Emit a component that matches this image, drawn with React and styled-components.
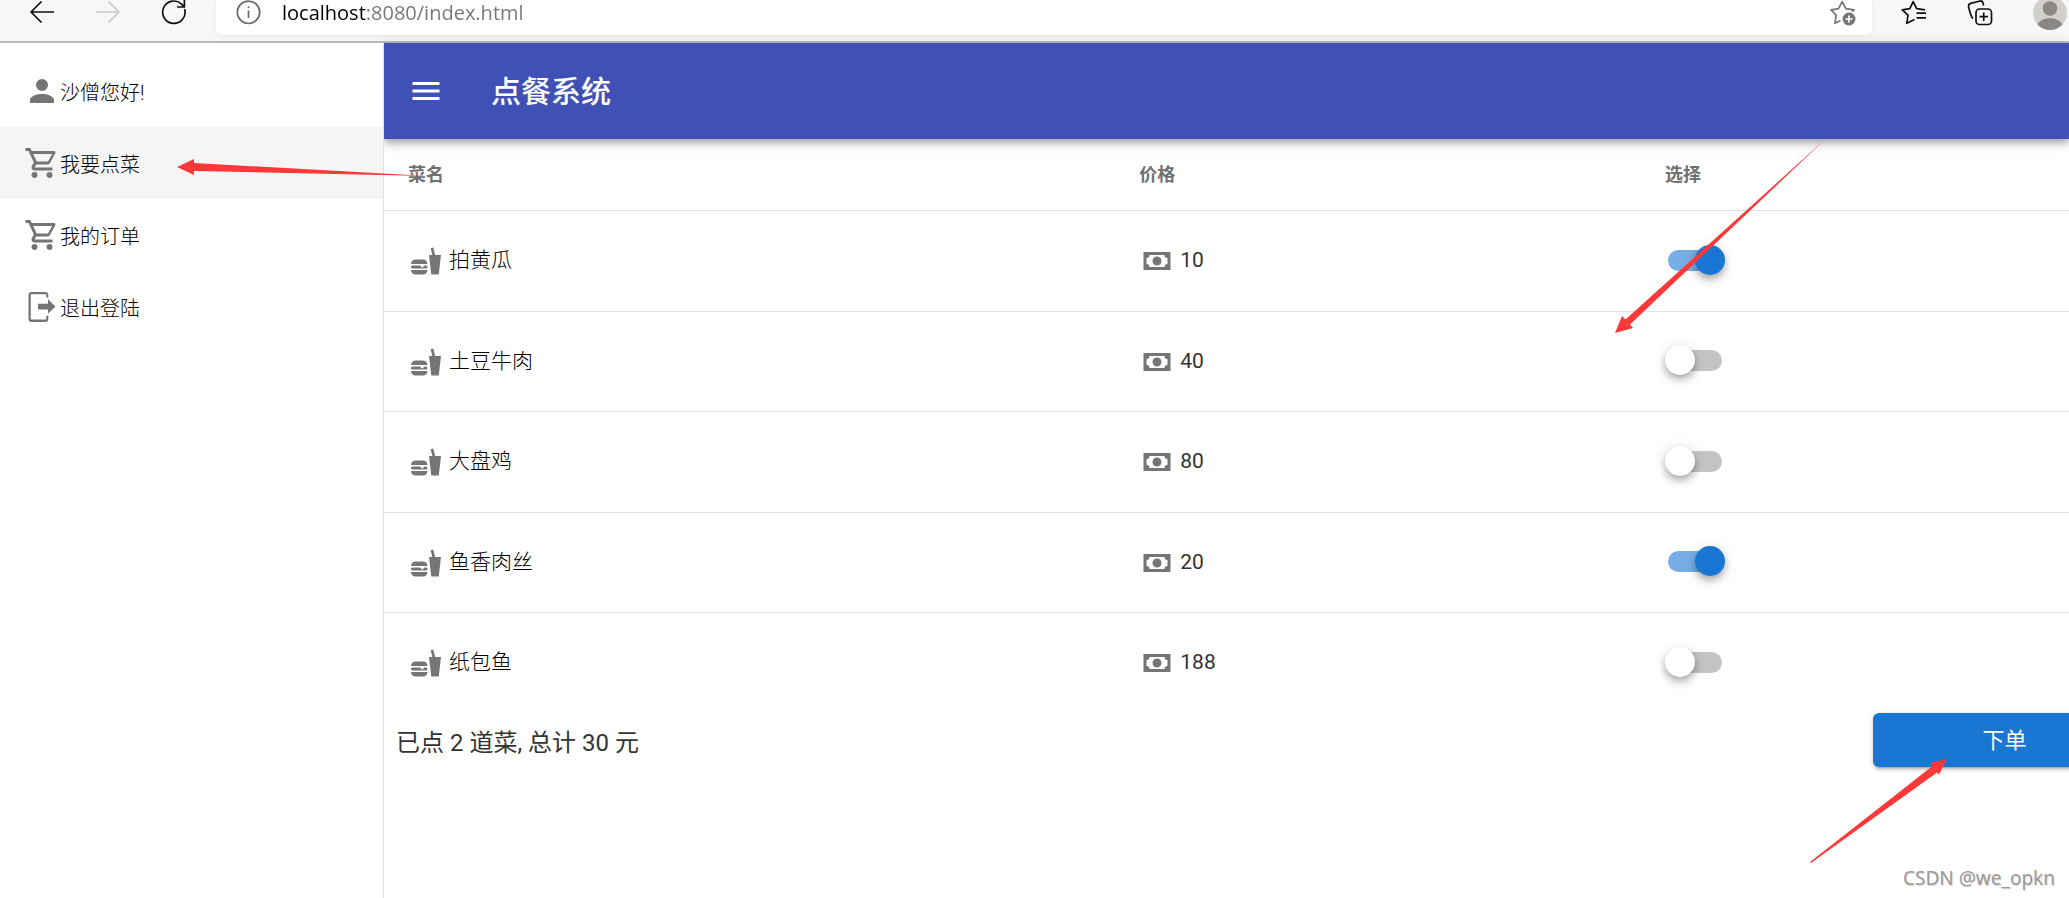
import React, { useState } from "react";
import styled, { createGlobalStyle, css } from "styled-components";

const GlobalStyle = createGlobalStyle`
  * { box-sizing: border-box; }
  body {
    margin: 0;
    background: #fff;
    color: rgba(0, 0, 0, 0.87);
    font-family: Roboto, "Noto Sans CJK SC", sans-serif;
    font-size: 21px;
  }
`;

const Page = styled.div`
  position: relative;
  display: flex;
  flex-direction: column;
  min-height: 100vh;
  overflow: hidden;
`;

/* ---------- browser toolbar ---------- */

const BrowserBar = styled.header`
  display: flex;
  align-items: flex-start;
  height: 43px;
  padding-left: 30px;
  background: #f7f7f7;
  border-bottom: 2px solid #bbb;
`;

const ToolButton = styled.button`
  display: block;
  flex: none;
  width: 26px;
  height: 26px;
  margin: 0 40px 0 0;
  padding: 0;
  border: 0;
  background: none;
  color: ${(p) => p.$color || "#111"};
  svg { display: block; width: 26px; height: 26px; overflow: visible; }
`;

const NavButtons = styled.div`
  display: flex;
  width: 186px;
  flex: none;
`;

const AddressBar = styled.div`
  display: flex;
  flex: 1;
  height: 35px;
  padding: 0 16px 0 20px;
  border-radius: 0 0 6px 6px;
  background: #fff;
  box-shadow: 0 1px 6px rgba(0, 0, 0, 0.08);
  ${ToolButton} { margin: 0; }
`;

const AddressInput = styled.input`
  flex: 1;
  height: 26px;
  margin: 0 0 0 20px;
  padding: 0;
  border: 0;
  outline: 0;
  font: 20px/26px "Open Sans", sans-serif;
  color: transparent;
  background: linear-gradient(90deg, #000 85px, #767676 85px);
  background-clip: text;
`;

const BrowserActions = styled.div`
  display: flex;
  flex: none;
  width: 197px;
  padding-left: 29px;
`;

const Avatar = styled.svg`
  flex: none;
  width: 34px;
  height: 34px;
  margin-top: -4px;
`;

/* ---------- layout ---------- */

const Body = styled.div`
  display: flex;
  flex: 1;
`;

const Sidebar = styled.nav`
  position: relative;
  z-index: 2;
  flex: none;
  width: 384px;
  padding-top: 12px;
  background: #fff;
  border-right: 1px solid #e0e0e0;
`;

const SideItem = styled.a`
  display: flex;
  align-items: center;
  height: 72px;
  padding-left: 24px;
  color: #000;
  font-size: 20px;
  font-weight: 300;
  text-decoration: none;
  ${(p) => p.$active && css`background: #f5f5f5;`}
`;

const Icon = styled.svg`
  display: block;
  flex: none;
  width: 36px;
  height: 36px;
  fill: ${(p) => p.$fill || "#757575"};
`;

const Main = styled.main`
  flex: 1;
  min-width: 0;
`;

const AppBar = styled.div`
  position: relative;
  display: flex;
  align-items: center;
  gap: 47px;
  height: 96px;
  padding: 0 24px;
  background: #3f51b5;
  color: #fff;
  box-shadow: 0 3px 6px -1px rgba(0, 0, 0, 0.2), 0 6px 8px rgba(0, 0, 0, 0.14),
    0 2px 15px rgba(0, 0, 0, 0.12);
`;

const MenuButton = styled.button`
  padding: 0;
  border: 0;
  background: none;
`;

const Title = styled.h1`
  margin: 0;
  padding-top: 2px;
  font-size: 30px;
  line-height: 36px;
  font-weight: 500;
`;

/* ---------- table ---------- */

const DishTable = styled.table`
  width: 100%;
  table-layout: fixed;
  border-collapse: separate;
  border-spacing: 0;
`;

const HeadCell = styled.th`
  width: ${(p) => p.$width || "auto"};
  height: 72px;
  padding: 0 24px 3px;
  border-bottom: 1px solid #e0e0e0;
  color: #707070;
  font-size: 18px;
  font-weight: 700;
  text-align: left;
`;

const Cell = styled.td`
  height: 100px;
  padding: 0 24px;
  color: ${(p) => (p.$light ? "#000" : "#333")};
  font-weight: ${(p) => (p.$light ? 300 : 400)};
`;

const Row = styled.tr`
  &:not(:last-child) ${Cell} { border-bottom: 1px solid #e0e0e0; }
  &:nth-child(odd):not(:last-child) ${Cell} { height: 101px; }
`;

const IconText = styled.div`
  display: flex;
  align-items: flex-start;
  gap: 5px;
  line-height: 34px;
`;

const Switch = styled.input`
  appearance: none;
  position: relative;
  display: block;
  width: 60px;
  height: 30px;
  margin: 0 0 3px;
  &::before {
    content: "";
    position: absolute;
    inset: 5px 3px 4px;
    border-radius: 11px;
    background: ${(p) => (p.checked ? "#78aee6" : "#c4c4c4")};
  }
  &::after {
    content: "";
    position: absolute;
    top: 0;
    left: ${(p) => (p.checked ? "30px" : "0")};
    width: 30px;
    height: 30px;
    border-radius: 50%;
    background: ${(p) => (p.checked ? "#1976d2" : "#fff")};
    box-shadow: 0 3px 6px -1px rgba(0, 0, 0, 0.2), 0 6px 8px rgba(0, 0, 0, 0.14),
      0 2px 15px rgba(0, 0, 0, 0.12);
  }
`;

const Footer = styled.div`
  display: flex;
  align-items: flex-start;
  justify-content: space-between;
  padding-left: 12px;
`;

const Total = styled.p`
  margin: 0;
  color: #333;
  font-size: 24px;
  line-height: 60px;
`;

const OrderButton = styled.button`
  width: 263px;
  height: 54px;
  margin-right: -67px;
  padding: 2px 0 0;
  border: 0;
  border-radius: 6px;
  background: #1976d2;
  color: #fff;
  font: 400 22px/52px Roboto, "Noto Sans CJK SC", sans-serif;
  box-shadow: 0 4px 2px -3px rgba(0, 0, 0, 0.2), 0 3px 3px rgba(0, 0, 0, 0.14),
    0 1px 7px rgba(0, 0, 0, 0.12);
`;

/* ---------- annotations over the page ---------- */

const Arrow = styled.svg`
  position: absolute;
  z-index: 3;
  top: ${(p) => p.$top}px;
  left: ${(p) => (p.$left === undefined ? "auto" : p.$left + "px")};
  right: ${(p) => (p.$right === undefined ? "auto" : p.$right + "px")};
  fill: #fd3838;
  pointer-events: none;
`;

const Watermark = styled.span`
  position: absolute;
  right: 14px;
  bottom: 7px;
  color: #999;
  font: 19px/26px "Noto Sans", sans-serif;
  text-shadow: 1px 1px 0 #e0e0e0;
`;

const PATHS = {
  account:
    "M12,4A4,4 0 0,1 16,8A4,4 0 0,1 12,12A4,4 0 0,1 8,8A4,4 0 0,1 12,4M12,14C16.42,14 20,15.79 20,18V20H4V18C4,15.79 7.58,14 12,14Z",
  cart:
    "M17,18A2,2 0 0,1 19,20A2,2 0 0,1 17,22C15.89,22 15,21.1 15,20C15,18.89 15.89,18 17,18M1,2H4.27L5.21,4H20A1,1 0 0,1 21,5C21,5.17 20.95,5.34 20.88,5.5L17.3,11.97C16.96,12.58 16.3,13 15.55,13H8.1L7.2,14.63L7.17,14.75A0.25,0.25 0 0,0 7.42,15H19V17H7C5.89,17 5,16.1 5,15C5,14.65 5.09,14.32 5.24,14.04L6.6,11.59L3,4H1V2M7,18A2,2 0 0,1 9,20A2,2 0 0,1 7,22C5.89,22 5,21.1 5,20C5,18.89 5.89,18 7,18M16,11L18.78,6H6.14L8.5,11H16Z",
  logout:
    "M16,16.5V13.6H9.3V9.8H16V6.9L21,11.7L16,16.5M14.2,2A2,2 0 0,1 16.2,4V6.2L14.8,5.2V3.5H4.5V20.4H14.8V18.4L16.2,17.4V20A2,2 0 0,1 14.2,22H5A2,2 0 0,1 3,20V4A2,2 0 0,1 5,2H14.2Z",
  menu: "M3,6H21V8H3V6M3,11H21V13H3V11M3,16H21V18H3V16Z",
  food:
    "M15.5,21L14,8H16.23L15.1,3.46L16.84,3L18.09,8H22L20.5,21H15.5M5,11H10A3,3 0 0,1 13,14H2A3,3 0 0,1 5,11M13,18A3,3 0 0,1 10,21H5A3,3 0 0,1 2,18H13M3,15H8L9.5,16.5L11,15H12A1,1 0 0,1 13,16A1,1 0 0,1 12,17H3A1,1 0 0,1 2,16A1,1 0 0,1 3,15Z",
  cash:
    "M3,6H21V18H3V6M12,9A3,3 0 0,1 15,12A3,3 0 0,1 12,15A3,3 0 0,1 9,12A3,3 0 0,1 12,9M7,8A2,2 0 0,1 5,10V14A2,2 0 0,1 7,16H17A2,2 0 0,1 19,14V10A2,2 0 0,1 17,8H7Z",
};

const Glyph = ({ name, fill }) => (
  <Icon viewBox="0 0 24 24" $fill={fill} aria-hidden="true">
    <path d={PATHS[name]} />
  </Icon>
);

const Line = ({ children }) => (
  <svg viewBox="0 0 26 26" fill="none" stroke="currentColor" strokeWidth="1.7" strokeLinejoin="round" aria-hidden="true">
    {children}
  </svg>
);

const MENU = [
  { icon: "cart", text: "我要点菜", active: true },
  { icon: "cart", text: "我的订单" },
  { icon: "logout", text: "退出登陆" },
];

const DISHES = [
  { name: "拍黄瓜", price: 10, on: true },
  { name: "土豆牛肉", price: 40, on: false },
  { name: "大盘鸡", price: 80, on: false },
  { name: "鱼香肉丝", price: 20, on: true },
  { name: "纸包鱼", price: 188, on: false },
];

function BrowserToolbar() {
  return (
    <BrowserBar>
      <NavButtons>
        <ToolButton aria-label="back">
          <Line><path d="M24 12H1M11.5 1.5L1 12l10.5 10.5" /></Line>
        </ToolButton>
        <ToolButton aria-label="forward" $color="#c9c9c9">
          <Line><path d="M0 12H23M12.5 1.5L23 12L12.5 22.5" /></Line>
        </ToolButton>
        <ToolButton aria-label="reload">
          <Line><path d="M22.6 9A11.2 11.2 0 1 1 19 3.6L22 6.6M22.4 0V7H15" /></Line>
        </ToolButton>
      </NavButtons>
      <AddressBar>
        <ToolButton aria-label="site information" $color="#6b6b6b">
          <Line>
            <circle cx="12.5" cy="12.3" r="11.2" />
            <path d="M12.5 10.5V18M12.5 6.3V8.3" />
          </Line>
        </ToolButton>
        <AddressInput aria-label="address" defaultValue="localhost:8080/index.html" />
        <ToolButton aria-label="add favourite" $color="#767676">
          <Line>
            <path d="M10.5 20.5L5 23.3L6.2 15.2L1 9.8L8.5 8.6L12.2 1.6L15.9 8.6L24 9.8L22 11.5" />
            <circle cx="19" cy="19" r="6.5" fill="currentColor" stroke="none" />
            <path d="M19 15.5V22.5M15.5 19H22.5" stroke="#fff" />
          </Line>
        </ToolButton>
      </AddressBar>
      <BrowserActions>
        <ToolButton aria-label="favourites">
          <Line>
            <path d="M13.5 19.5L5.8 23.3L7 15.2L1.2 9.8L8.8 8.6L12.2 1.6L15.7 8.6L24 9.8M15.5 13.2H25M15.5 17.8H25" />
          </Line>
        </ToolButton>
        <ToolButton aria-label="collections">
          <Line>
            <rect x="9" y="9" width="15.5" height="15.5" rx="3.5" />
            <path d="M16.7 12.5V21M12.5 16.7H21M6 18.5C4 17 3 13 1.6 7C1.2 5 2 4 3.6 3.4L13 1C15 .6 16 1.5 16.6 5.5" />
          </Line>
        </ToolButton>
        <Avatar viewBox="0 0 34 34" aria-hidden="true">
          <clipPath id="face"><circle cx="17" cy="17" r="17" /></clipPath>
          <circle cx="17" cy="17" r="17" fill="#d1d0cd" />
          <g clipPath="url(#face)" fill="#8b8784">
            <circle cx="17" cy="12.5" r="7.3" />
            <ellipse cx="17" cy="31" rx="13" ry="9" />
          </g>
        </Avatar>
      </BrowserActions>
    </BrowserBar>
  );
}

export default function App() {
  const [dishes, setDishes] = useState(DISHES);
  const chosen = dishes.filter((d) => d.on);
  const sum = chosen.reduce((s, d) => s + d.price, 0);
  const toggle = (name) =>
    setDishes(dishes.map((d) => (d.name === name ? { ...d, on: !d.on } : d)));

  return (
    <Page>
      <GlobalStyle />
      <BrowserToolbar />
      <Body>
        <Sidebar>
          <SideItem as="div"><Glyph name="account" />沙僧您好!</SideItem>
          {MENU.map((m) => (
            <SideItem key={m.text} href="#" $active={m.active}>
              <Glyph name={m.icon} />{m.text}
            </SideItem>
          ))}
        </Sidebar>
        <Main>
          <AppBar>
            <MenuButton aria-label="menu"><Glyph name="menu" fill="#fff" /></MenuButton>
            <Title>点餐系统</Title>
          </AppBar>
          <DishTable>
            <thead>
              <tr>
                <HeadCell $width="43.4%">菜名</HeadCell>
                <HeadCell $width="31.2%">价格</HeadCell>
                <HeadCell>选择</HeadCell>
              </tr>
            </thead>
            <tbody>
              {dishes.map((d) => (
                <Row key={d.name}>
                  <Cell $light>
                    <IconText><Glyph name="food" />{d.name}</IconText>
                  </Cell>
                  <Cell><IconText><Glyph name="cash" />{d.price}</IconText></Cell>
                  <Cell>
                    <Switch type="checkbox" role="switch" aria-label={d.name} checked={d.on} onChange={() => toggle(d.name)} />
                  </Cell>
                </Row>
              ))}
            </tbody>
          </DishTable>
          <Footer>
            <Total>已点 {chosen.length} 道菜, 总计 {sum} 元</Total>
            <OrderButton>下单</OrderButton>
          </Footer>
        </Main>
      </Body>
      <Arrow $top={159} $left={177} width="252" height="18" aria-hidden="true">
        <path d="M0 8L17 0V4L251 17L17 12V16Z" />
      </Arrow>
      <Arrow $top={139} $right={243} width="211" height="194" aria-hidden="true">
        <path d="M0 194L7 177L10.5 180.5L210.5 0L15 185.5L18 189Z" />
      </Arrow>
      <Arrow $top={759} $right={121} width="138" height="104" aria-hidden="true">
        <path d="M137 0L120 4L122.5 7L0 103L1 104L127 13.5L129 15.5Z" />
      </Arrow>
      <Watermark>CSDN @we_opkn</Watermark>
    </Page>
  );
}
